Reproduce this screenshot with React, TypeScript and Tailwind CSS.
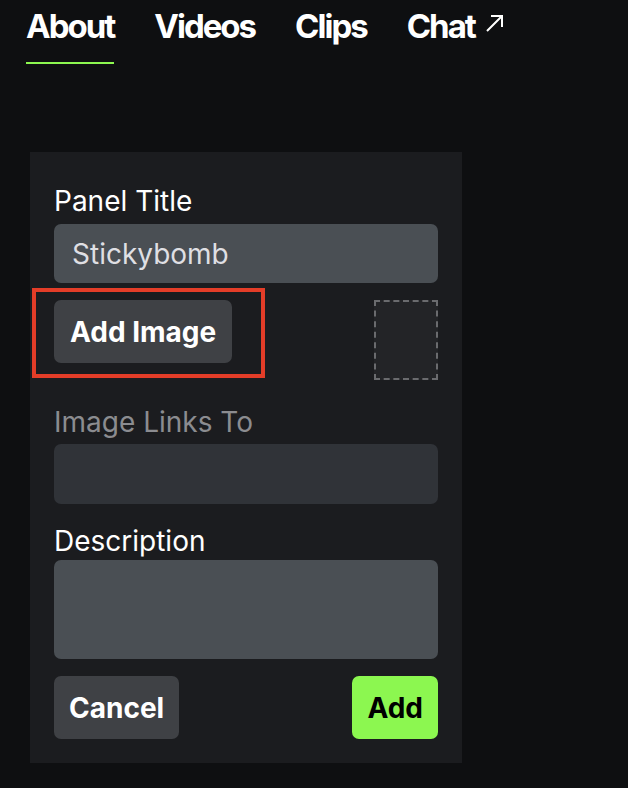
const font = { fontFamily: "Inter, 'Noto Sans', sans-serif" };

const tabs = ["About", "Videos", "Clips"];

function ArrowOut() {
  return (
    <svg width="19" height="19" viewBox="0 0 19 19" fill="none" className="ml-[10px] mt-[-6px]">
      <path d="M2 17 L17 2 M6 2 H17 V13" stroke="white" strokeWidth="2" />
    </svg>
  );
}

export default function App() {
  return (
    <div className="min-h-[788px] w-[628px] bg-[#0e0f11] text-white" style={font}>
      <nav className="flex items-start gap-[40px] pl-[26px] pt-[4px]">
        {tabs.map((tab, i) => (
          <div key={tab} className="flex flex-col">
            <span className="text-[33px] font-bold leading-[44px] tracking-[-2px]">{tab}</span>
            {i === 0 ? <span className="mt-[14px] h-[2px] w-full bg-[#8cf750]" /> : null}
          </div>
        ))}
        <div className="flex items-center">
          <span className="text-[33px] font-bold leading-[44px] tracking-[-2px]">Chat</span>
          <ArrowOut />
        </div>
      </nav>

      <section className="ml-[30px] mt-[88px] flex w-[432px] flex-col bg-[#1b1c1f] px-[24px] pb-[24px] pt-[32px]">
        <label className="text-[28px] leading-[34px] text-white">Panel Title</label>
        <div className="mt-[6px] flex h-[59px] items-center rounded-[7px] bg-[#4a4f54] px-[18px] text-[28px] text-[#dfdfe3]">
          Stickybomb
        </div>

        <div className="mt-[17px] flex items-start justify-between">
          <div className="relative">
            <button className="h-[63px] rounded-[7px] bg-[#3f4145] px-[16px] text-[28px] font-bold text-white">
              Add Image
            </button>
            <span className="absolute left-[-22px] top-[-12px] h-[90px] w-[233px] border-4 border-[#e43d28]" />
          </div>
          <div className="h-[80px] w-[64px] border-2 border-dashed border-[#6a6b6e] bg-[#232427]" />
        </div>

        <label className="mt-[25px] text-[28px] leading-[34px] text-[#8b8c90]">Image Links To</label>
        <div className="mt-[5px] h-[60px] rounded-[7px] bg-[#303338]" />

        <label className="mt-[20px] text-[28px] leading-[34px] text-white">Description</label>
        <div className="mt-[2px] h-[99px] rounded-[7px] bg-[#4a4f54]" />

        <div className="mt-[17px] flex items-center justify-between">
          <button className="h-[63px] rounded-[7px] bg-[#3f4145] px-[15px] text-[28px] font-bold text-white">
            Cancel
          </button>
          <button className="h-[63px] rounded-[7px] bg-[#8cf750] px-[15px] text-[28px] font-bold text-black">
            Add
          </button>
        </div>
      </section>
    </div>
  );
}
